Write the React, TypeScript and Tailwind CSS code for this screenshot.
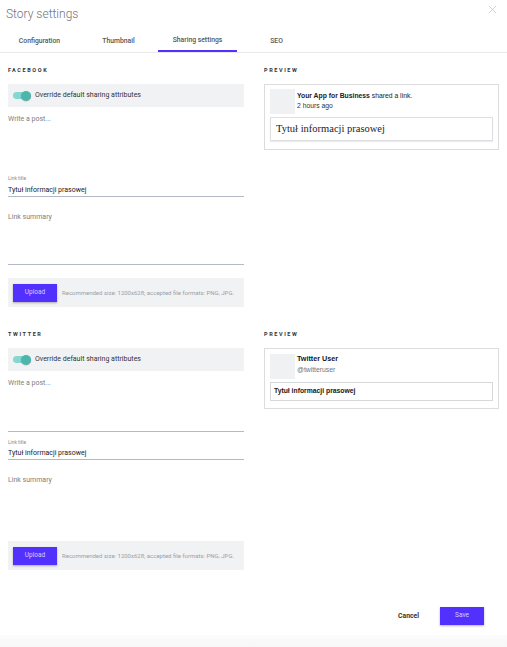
import React from "react";

const Toggle = () => (
  <div className="relative w-[18px] h-[10px] flex items-center">
    <div className="w-[18px] h-[7px] rounded-full bg-[#86d7cf]" />
    <div className="absolute right-0 top-0 w-[10px] h-[10px] rounded-full bg-[#4db6ac] shadow-[0_0.5px_1px_rgba(0,0,0,0.25)]" />
  </div>
);

const SectionLabel = ({ children }: { children: React.ReactNode }) => (
  <div className="h-[8px] leading-[8px] text-[5.5px] font-bold tracking-[1.6px] text-[#333] mt-[13px]">
    {children}
  </div>
);

const ToggleRow = ({ mt }: { mt: string }) => (
  <div className={mt + " h-[23px] bg-[#f1f2f4] flex items-center pl-[5px] gap-[4px]"}>
    <Toggle />
    <span className="text-[7px] text-[#333] leading-[9px]">Override default sharing attributes</span>
  </div>
);

const UploadBox = () => (
  <div className="h-[29px] bg-[#f1f2f4] flex items-center pl-[5px] gap-[5px]">
    <button className="w-[44px] h-[18px] bg-[#5231ff] text-[#d2ccff] text-[6.5px] shadow-[0_1px_2px_rgba(0,0,0,0.3)]">
      Upload
    </button>
    <span className="text-[6px] text-[#9aa0a8]">Recommended size: 1200x628; accepted file formats: PNG, JPG.</span>
  </div>
);

export default function App() {
  return (
    <div
      className="w-[507px] h-[647px] bg-white flex flex-col overflow-hidden"
      style={{ fontFamily: "Roboto, 'Liberation Sans', sans-serif" }}
    >
      {/* Header */}
      <div className="flex justify-between items-start pl-[6px] pr-[10px] pt-[6px] h-[28px]">
        <div className="text-[12px] leading-[16px] text-[#707580] font-light">Story settings</div>
        <svg width="9" height="9" viewBox="0 0 10 10" className="-mt-[1px]">
          <path d="M1 1 L9 9 M9 1 L1 9" stroke="#c4c7cc" strokeWidth="0.9" fill="none" />
        </svg>
      </div>
      {/* Tabs */}
      <div className="flex h-[25px] border-b border-[#e8e9ec]">
        {["Configuration", "Thumbnail", "Sharing settings", "SEO"].map((t, i) => (
          <div
            key={t}
            className={
              "w-[79px] flex items-center justify-center text-[6.8px] font-medium text-[#555] " +
              (i === 2 ? "border-b-2 border-[#5231ff] pt-[3px]" : "pt-[2px]")
            }
          >
            {t}
          </div>
        ))}
      </div>

      {/* Facebook row */}
      <div className="grid grid-cols-[236px_235px] gap-x-[20px] pl-[8px]">
        <div className="flex flex-col">
          <SectionLabel>FACEBOOK</SectionLabel>
          <ToggleRow mt="mt-[10px]" />
          <div className="h-[69px] pt-[8px] text-[7px] leading-[9px] text-[#808080]">Write a post...</div>
          <div className="h-[6px] leading-[6px] text-[4.8px] text-[#8a8a8a]">Link title</div>
          <div className="mt-[4px] h-[11px] leading-[9px] text-[7px] text-[#222] border-b border-[#b3bac5]">Tytuł informacji prasowej</div>
          <div className="h-[68px] pt-[16px] text-[7px] leading-[9px] text-[#808080] border-b border-[#b3bac5]">Link summary</div>
          <div className="h-[13px]" />
          <UploadBox />
        </div>
        <div className="flex flex-col">
          <SectionLabel>PREVIEW</SectionLabel>
          <div className="mt-[10px] h-[66px] border border-[#dcdcdc] px-[5px] pt-[4px]">
            <div className="flex gap-[2px]">
              <div className="w-[25px] h-[25px] bg-[#f0f1f3]" />
              <div className="flex flex-col pt-[2px]" style={{ fontFamily: "'Liberation Sans', Arial, sans-serif" }}>
                <div className="text-[6.8px] leading-[9px] text-[#1d2129]">
                  <span className="font-bold">Your App for Business</span> shared a link.
                </div>
                <div className="text-[6.8px] leading-[10px] mt-[1px] text-[#333]">2 hours ago</div>
              </div>
            </div>
            <div className="mt-[3px] h-[24px] border border-[#dddfe2] shadow-[0_1px_1px_rgba(0,0,0,0.08)] flex items-center pl-[5px] text-[10.5px] text-[#1d2129]" style={{ fontFamily: "'Liberation Serif', 'Times New Roman', serif" }}>
              Tytuł informacji prasowej
            </div>
          </div>
        </div>
      </div>

      {/* Twitter row */}
      <div className="grid grid-cols-[236px_235px] gap-x-[20px] pl-[8px] mt-[10px]">
        <div className="flex flex-col">
          <SectionLabel>TWITTER</SectionLabel>
          <ToggleRow mt="mt-[10px]" />
          <div className="h-[61px] pt-[8px] text-[7px] leading-[9px] text-[#808080] border-b border-[#b3bac5]">Write a post...</div>
          <div className="mt-[8px] h-[6px] leading-[6px] text-[4.8px] text-[#8a8a8a]">Link title</div>
          <div className="mt-[3px] h-[11px] leading-[9px] text-[7px] text-[#222] border-b border-[#b3bac5]">Tytuł informacji prasowej</div>
          <div className="h-[68px] pt-[16px] text-[7px] leading-[9px] text-[#808080]">Link summary</div>
          <div className="h-[13px]" />
          <UploadBox />
        </div>
        <div className="flex flex-col">
          <SectionLabel>PREVIEW</SectionLabel>
          <div className="mt-[10px] h-[61px] border border-[#dcdcdc] px-[5px] pt-[5px]">
            <div className="flex gap-[2px]" style={{ fontFamily: "'Liberation Sans', Arial, sans-serif" }}>
              <div className="w-[25px] h-[25px] bg-[#f0f1f3]" />
              <div className="flex flex-col">
                <div className="text-[7.2px] leading-[10px] font-bold text-[#14171a]">Twitter User</div>
                <div className="text-[6.8px] leading-[10px] mt-[1px] text-[#657786]">@twitteruser</div>
              </div>
            </div>
            <div className="mt-[3px] h-[19px] border border-[#d6d9dc] flex items-center pl-[3px] text-[6.8px] font-bold text-[#14171a]" style={{ fontFamily: "'Liberation Sans', Arial, sans-serif" }}>
              Tytuł informacji prasowej
            </div>
          </div>
        </div>
      </div>

      {/* Footer */}
      <div className="flex justify-end items-center gap-[21px] pr-[23px] mt-[37px] h-[18px]">
        <span className="text-[6.8px] font-bold text-[#333]">Cancel</span>
        <button className="w-[44px] h-[18px] bg-[#5231ff] text-[#d2ccff] text-[6.5px] shadow-[0_1px_2px_rgba(0,0,0,0.3)]">Save</button>
      </div>
      <div className="flex-1" />
      <div className="h-[12px] bg-gradient-to-b from-[#fcfcfc] to-[#f7f7f7]" />
    </div>
  );
}
